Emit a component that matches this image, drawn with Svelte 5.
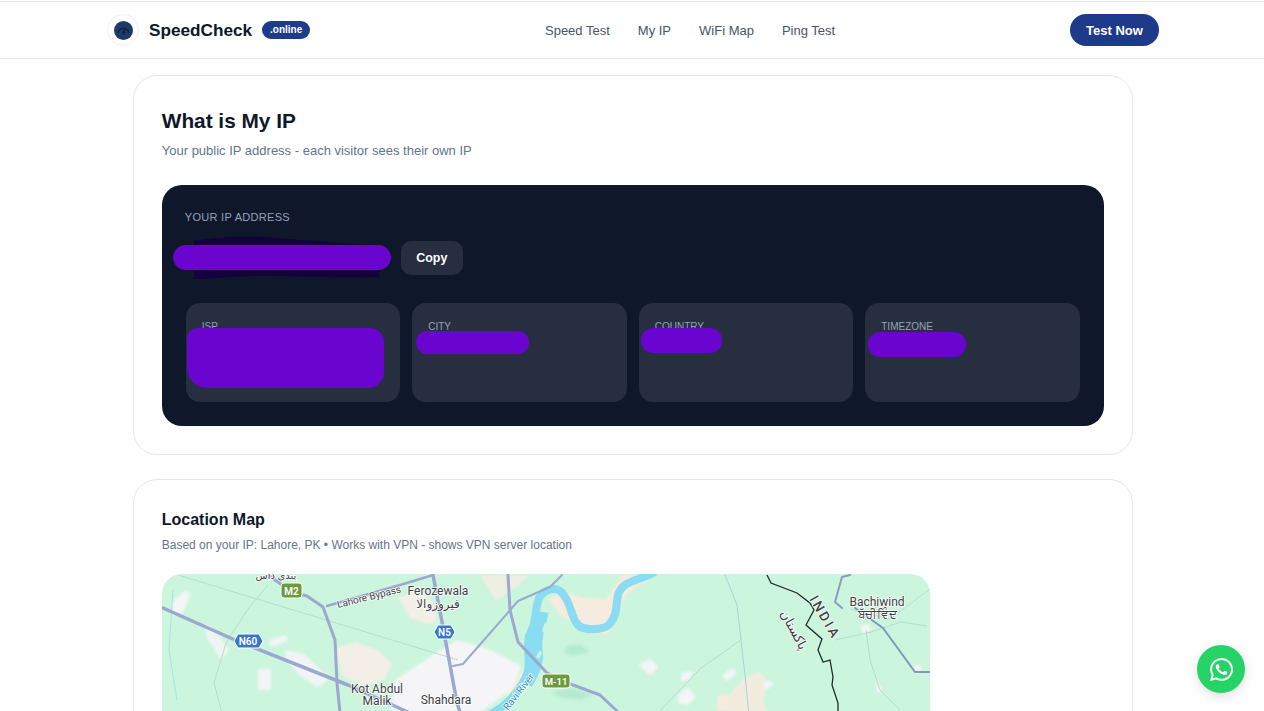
<script>
  const navLinks = ["Speed Test", "My IP", "WiFi Map", "Ping Test"];
  const stats = [
    { label: "ISP", blob: "isp" },
    { label: "City", blob: "city" },
    { label: "Country", blob: "country" },
    { label: "Timezone", blob: "zone" }
  ];
</script>

<header class="header">
  <div class="header-inner">
    <a class="brand" href="#top">
      <span class="logo">
        <svg viewBox="0 0 20 20" width="19" height="19">
          <circle cx="10" cy="10" r="10" fill="#1e3a68" />
          <path d="M4.5 12.5a5.6 5.6 0 0 1 11 0" fill="none" stroke="#0f2342" stroke-width="1.6" />
          <path d="M10 12l2-5" stroke="#0f2342" stroke-width="1.4" />
          <circle cx="10" cy="12.5" r="1.5" fill="#0f2342" />
        </svg>
      </span>
      <span class="brand-name">SpeedCheck</span>
      <span class="brand-tag">.online</span>
    </a>
    <nav class="nav">
      {#each navLinks as link}
        <a href="#top">{link}</a>
      {/each}
    </nav>
    <button class="cta">Test Now</button>
  </div>
</header>

<main class="page">
  <section class="card">
    <h1>What is My IP</h1>
    <p class="sub">Your public IP address - each visitor sees their own IP</p>

    <div class="panel">
      <div class="panel-label">YOUR IP ADDRESS</div>
      <div class="ip-row">
        <div class="ip-value">
          <svg class="ip-scribble" viewBox="0 0 220 44" width="220" height="44">
            <path d="M21 5C40 1 70 0 90 1c30 2 60 5 118 9l-2 31c-40 2-108-2-128-1-30 1-40 3-57 3z" fill="#14003c" />
            <rect x="0" y="9" width="218" height="25" rx="12.5" fill="#6a04cf" />
          </svg>
        </div>
        <button class="copy">Copy</button>
      </div>
      <div class="stats">
        {#each stats as stat}
          <div class="stat">
            <div class="stat-label">{stat.label}</div>
            <div class="redact {stat.blob}"></div>
          </div>
        {/each}
      </div>
    </div>
  </section>

  <section class="card map-card">
    <h2>Location Map</h2>
    <p class="sub small">Based on your IP: Lahore, PK • Works with VPN - shows VPN server location</p>

    <div class="map">
      <svg viewBox="162 574 768 300" width="768" height="300">
        <rect x="162" y="574" width="768" height="300" fill="#cbf5dc" />

        <!-- land patches -->
        <g class="soft">
          <path d="M398 598l20-8 14 10 6 22-10 2-18-6z" fill="#f3efe6" />
          <path d="M336 648l20-6 22 8 14 14-8 16-22 6-20-10z" fill="#f3efe6" />
          <path d="M480 575h50l-14 12-20 14z" fill="#efeee2" />
          <path d="M622 575h32l-28 20-10 22-8 18-24-4-22-14-14-18 14-8 18 6 26 2z" fill="#f5ecdf" />
          <path d="M745 678l14-6 8 8-4 20 4 12h-38l4-22z" fill="#f4ebdf" />
          <path d="M505 690l22-26 12-20-4 28-24 30z" fill="#f5ecdf" />
          <path d="M395 680l36-24 26-16 34 10 30 16-10 24-30 22h-90z" fill="#f5f5f8" />
          <path d="M172 602l14-12 5 4-10 22-8-2z" fill="#f4f5f8" />
          <path d="M205 622l14 14 10 14-8 10-14-22z" fill="#f1f4f4" />
          <path d="M268 641l16-6 5 5-17 7z" fill="#f4f5f8" />
          <path d="M258 669h13v21h-13z" fill="#f4f5f8" />
          <path d="M284 650l20 4 26 24-12 10-20-14-12-14z" fill="#f1f4f4" />
          <path d="M638 665l12-6 8 8-8 8z" fill="#f4f5f8" />
          <path d="M681 673l12-2-3 8-9 3z" fill="#f4f5f8" />
          <path d="M678 695l10-8 8 10-8 8-10-2z" fill="#f4f5f8" />
          <path d="M762 684l8-4 4 4-8 6z" fill="#f4f5f8" />
          <path d="M722 676l10-8 5 5-10 8z" fill="#f4f5f8" />
          <path d="M718 695l18-2 4 18h-24z" fill="#f4ebdf" />
          <path d="M877 682l5 6-2 6-4-4z" fill="#f4f5f8" />
          <path d="M860 626l8-2 4 4-8 8z" fill="#f4f5f8" />
          <path d="M913 667l8-3 0 8-6 2z" fill="#f4f5f8" />
          <path d="M566 646l14-2 10 8-18 4-8-4z" fill="#b4ead0" />
          <path d="M552 692l20-4 20 6-10 6-20-2z" fill="#b4ead0" />
        </g>

        <!-- thin roads -->
        <g fill="none" stroke="#b6dcd0" stroke-width="1">
          <path d="M178 575l280 85" />
          <path d="M268 585l-20 24-22 34-12 40 8 30" />
          <path d="M725 575l12 30 8 70 4 40" stroke="#a8d4d8" />
          <path d="M660 711l40-42 42-30" />
          <path d="M850 609l40 10 40-30" />
          <path d="M835 640l36-8 30-10 26 4" />
          <path d="M866 630l4 30 10 30 20 20" />
        </g>

        <!-- river -->
        <path d="M655 572c-14 8-30 8-36 20-4 10 0 20-8 30-4 8-20 8-28 6-12-4-10-22-20-34-6-8-18-6-24 4-6 16 0 18-10 38-4 20 6 28-8 50-10 16-22 24-38 32" fill="none" stroke="#8adcf2" stroke-width="8" />
        <path d="M543 612c-2 14-8 24-6 38 2 14-4 24-10 34" fill="none" stroke="#8adcf2" stroke-width="11" />
        <path d="M545 622l-3 9 3 3 2-8zM540 650l-4 7 3 2 3-6z" fill="#cbf5dc" />
        <path d="M173 590l-4 60 8 50" fill="none" stroke="#a7e3ea" stroke-width="1" />

        <!-- main roads -->
        <g fill="none" stroke="#9ba8d0" stroke-linejoin="round" stroke-linecap="round">
          <path d="M163 608l72 32 113 45 62 28" stroke-width="3.5" />
          <path d="M268 575l24 17 15 4 16 11 12 33 2 43 3 30" stroke-width="3" />
          <path d="M327 606l73-21 33-10" stroke-width="2.5" />
          <path d="M433 575l10 52 14 76 4 12" stroke-width="3.5" />
          <path d="M453 666l10-2 55-63 32-14 12-12" stroke-width="2" />
          <path d="M508 575l2 35 8 32 29 31 26 12 27 10 17 16" stroke-width="3" />
          <path d="M850 575l-8 2-7 25 7 6" stroke-width="2" stroke="#8a9dc0" />
          <path d="M855 608l28 20 32 44h15" stroke-width="2" stroke="#7f99b8" />
        </g>

        <!-- border -->
        <path d="M767 575l4 8 26 10 13 10 4 7-8 15 16 14-4 11 5 12 7-2 3 17-1 8 6 18v10" fill="none" stroke="#1f2a2a" stroke-width="1.3" />

        <!-- shields -->
        <g class="map-shield">
          <rect x="281" y="583" width="21" height="15" rx="3" fill="#6d9a3f" stroke="#fff" />
          <text x="291.5" y="594.5" fill="#fff" font-size="10" text-anchor="middle" font-weight="600">M2</text>
          <path d="M234 641l4-7h21l4 7-4 7h-21z" fill="#3a76c6" stroke="#fff" />
          <text x="248" y="645" fill="#fff" font-size="10" text-anchor="middle" font-weight="600">N60</text>
          <path d="M434 632l4-7h13l4 7-4 7h-13z" fill="#3a76c6" stroke="#fff" />
          <text x="444.5" y="636" fill="#fff" font-size="10" text-anchor="middle" font-weight="600">N5</text>
          <rect x="542" y="674" width="28" height="14" rx="3" fill="#6d9a3f" stroke="#fff" />
          <text x="556" y="685" fill="#fff" font-size="9.5" text-anchor="middle" font-weight="600">M-11</text>
        </g>

        <!-- labels -->
        <g class="map-text">
          <text x="438" y="595" text-anchor="middle">Ferozewala</text>
          <text x="438" y="608" text-anchor="middle">فیروزوالا</text>
          <text class="t-small" x="276" y="579" text-anchor="middle">پنڈی داس</text>
          <text x="377" y="693" text-anchor="middle">Kot Abdul</text>
          <text x="377" y="705" text-anchor="middle">Malik</text>
          <text x="446" y="704" text-anchor="middle">Shahdara</text>
          <text x="877" y="606" text-anchor="middle">Bachiwind</text>
          <text x="877" y="618" text-anchor="middle">ਬੱਚੀਵਿੰਦ</text>
          <text class="t-small" transform="translate(338 608) rotate(-14)">Lahore Bypass</text>
          <text class="t-urdu" transform="translate(780 613) rotate(62)">پاکستان</text>
          <text class="t-india" transform="translate(809 599) rotate(60)">INDIA</text>
          <text class="t-river" transform="translate(508 711) rotate(-52)">Ravi River</text>
        </g>
      </svg>
    </div>
  </section>
</main>

<a class="whatsapp" href="#top" aria-label="WhatsApp">
  <svg viewBox="0 0 24 24" width="23" height="23" fill="#fff">
    <path d="M17.47 14.38c-.3-.15-1.76-.87-2.03-.97-.27-.1-.47-.15-.67.15-.2.3-.77.97-.94 1.16-.17.2-.35.22-.64.07-.3-.15-1.26-.46-2.39-1.47-.88-.79-1.48-1.76-1.65-2.06-.17-.3-.02-.46.13-.6.13-.14.3-.35.45-.52.15-.17.2-.3.3-.5.1-.2.05-.37-.03-.52-.07-.15-.67-1.61-.92-2.21-.24-.58-.49-.5-.67-.51h-.57c-.2 0-.52.07-.79.37-.27.3-1.04 1.02-1.04 2.48s1.07 2.88 1.21 3.07c.15.2 2.1 3.2 5.08 4.49.71.3 1.26.49 1.69.62.71.23 1.36.2 1.87.12.57-.09 1.76-.72 2.01-1.41.25-.7.25-1.29.17-1.41-.07-.13-.27-.2-.57-.35zM12.05 21.78h-.01a9.87 9.87 0 0 1-5.03-1.38l-.36-.21-3.74.98 1-3.65-.24-.37a9.86 9.86 0 0 1-1.51-5.26c0-5.45 4.44-9.88 9.89-9.88 2.64 0 5.12 1.03 6.99 2.9a9.82 9.82 0 0 1 2.89 6.99c0 5.45-4.44 9.88-9.88 9.88zM20.46 3.49A11.82 11.82 0 0 0 12.05 0C5.5 0 .16 5.34.16 11.89c0 2.1.55 4.14 1.59 5.95L.06 24l6.3-1.65a11.88 11.88 0 0 0 5.68 1.45h.01c6.55 0 11.89-5.34 11.89-11.89 0-3.18-1.24-6.17-3.48-8.42z" />
  </svg>
</a>

<style>
  :global(html), :global(body) {
    background: #fff;
  }

  :global(body) {
    font-family: "Liberation Sans", Arial, sans-serif;
    color: #0f172a;
  }

  .header {
    margin-top: 1px;
    height: 58px;
    border-top: 1px solid #e5e7eb;
    border-bottom: 1px solid #e5e7eb;
    box-sizing: border-box;
  }

  .header-inner {
    width: 1052px;
    height: 100%;
    margin-left: 107px;
    display: flex;
    align-items: center;
    justify-content: space-between;
  }

  .brand {
    display: flex;
    align-items: center;
    text-decoration: none;
    color: #0f172a;
  }

  .logo {
    width: 32px;
    height: 32px;
    box-sizing: border-box;
    border: 1px solid #eef0f4;
    border-radius: 50%;
    display: flex;
    align-items: center;
    justify-content: center;
  }

  .brand-name {
    margin-left: 10px;
    font-size: 17.2px;
    font-weight: 700;
  }

  .brand-tag {
    margin-left: 10px;
    width: 48px;
    height: 18px;
    line-height: 18px;
    text-align: center;
    background: #1e3a8a;
    color: #fff;
    font-size: 10px;
    font-weight: 700;
    border-radius: 10px;
  }

  .nav {
    display: flex;
    gap: 28px;
  }

  .nav a {
    color: #475569;
    font-size: 13px;
    text-decoration: none;
  }

  .cta {
    width: 89px;
    height: 32px;
    border: 0;
    padding: 0;
    border-radius: 16px;
    background: #1e3a8a;
    color: #fff;
    font-family: inherit;
    font-size: 13px;
    font-weight: 700;
  }

  .page {
    width: 1000px;
    margin-left: 132.75px;
    padding-top: 16px;
    display: flex;
    flex-direction: column;
    gap: 24px;
  }

  .card {
    border: 1px solid #e5e7eb;
    border-radius: 24px;
    padding: 28px;
    background: #fff;
  }

  h1 {
    margin: 0;
    font-size: 20.8px;
    line-height: 33px;
    font-weight: 700;
  }

  h2 {
    margin: 0;
    font-size: 16px;
    line-height: 24px;
    font-weight: 700;
  }

  .sub {
    margin: 4px 0 0;
    font-size: 13px;
    line-height: 20px;
    color: #64748b;
  }

  .sub.small {
    margin-top: 4px;
    font-size: 12px;
    line-height: 18px;
  }

  .panel {
    margin-top: 24px;
    padding: 24px;
    background: #0f172a;
    border-radius: 20px;
  }

  .panel-label {
    margin-left: -1px;
    font-size: 11px;
    line-height: 16px;
    letter-spacing: 0.3px;
    color: #94a3b8;
  }

  .ip-row {
    margin-top: 13px;
    display: flex;
    align-items: center;
    gap: 10px;
  }

  .ip-value {
    position: relative;
    width: 206px;
    height: 40px;
    margin-left: -1px;
  }

  .ip-scribble {
    position: absolute;
    left: -12px;
    top: -2px;
  }

  .copy {
    width: 62px;
    height: 34px;
    padding: 0;
    border: 0;
    border-radius: 10px;
    background: #272e3f;
    color: #fff;
    font-family: inherit;
    font-size: 12.5px;
    font-weight: 700;
  }

  .stats {
    margin-top: 25px;
    display: grid;
    grid-template-columns: repeat(4, 1fr);
    gap: 12px;
  }

  .stat {
    position: relative;
    height: 99px;
    box-sizing: border-box;
    padding: 18px 16px;
    border-radius: 14px;
    background: #272e3f;
  }

  .stat-label {
    font-size: 10px;
    line-height: 11px;
    text-transform: uppercase;
    color: #94a3b8;
  }

  .redact {
    position: absolute;
    background: #6a04cf;
  }

  .isp {
    left: 1px;
    top: 25px;
    width: 197px;
    height: 60px;
    border-radius: 10px 14px 16px 20px;
  }

  .city {
    left: 4px;
    top: 28px;
    width: 113px;
    height: 23px;
    border-radius: 12px;
  }

  .country {
    left: 2px;
    top: 25px;
    width: 81px;
    height: 25px;
    border-radius: 12px;
  }

  .zone {
    left: 3px;
    top: 29px;
    width: 98px;
    height: 25px;
    border-radius: 12px;
  }

  .map {
    margin-top: 20px;
    width: 768px;
    height: 300px;
    border-radius: 20px;
    overflow: hidden;
  }

  .map svg {
    display: block;
  }

  .soft {
    filter: blur(1.5px);
  }

  .map-text text {
    font-family: Roboto, "Noto Sans", "DejaVu Sans", sans-serif;
    font-size: 12px;
    fill: #3c4043;
    paint-order: stroke;
    stroke: #fff;
    stroke-width: 1.5px;
  }

  .map-text .t-small {
    font-size: 10px;
  }

  .map-text .t-urdu {
    font-size: 13px;
  }

  .map-text .t-india {
    font-size: 13.5px;
    font-weight: 500;
    letter-spacing: 2.6px;
    fill: #444;
  }

  .map-text .t-river {
    font-size: 10px;
    fill: #1a8fb8;
  }

  .map-shield text {
    font-family: Roboto, sans-serif;
  }

  .whatsapp {
    position: fixed;
    left: 1197px;
    top: 645px;
    width: 48px;
    height: 48px;
    border-radius: 50%;
    background: #25d366;
    box-shadow: 0 4px 12px rgba(0, 0, 0, 0.12);
    display: flex;
    align-items: center;
    justify-content: center;
  }
</style>
